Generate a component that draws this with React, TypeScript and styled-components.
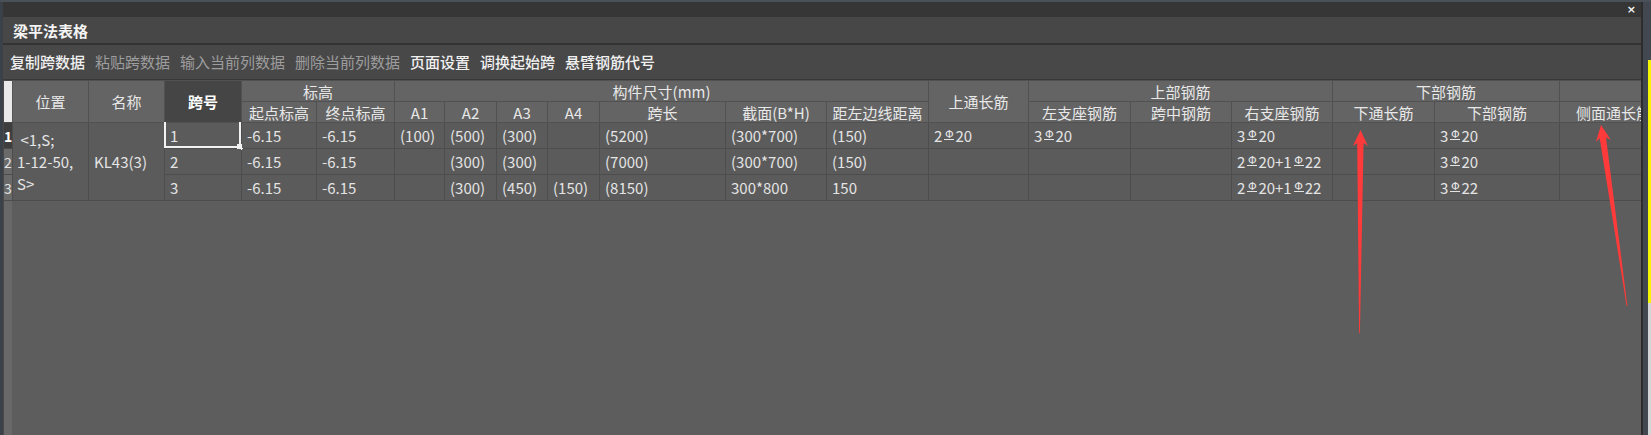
import React from "react";
import styled, { createGlobalStyle } from "styled-components";

const GlobalStyle = createGlobalStyle`
  html, body { margin: 0; padding: 0; background: #3d434b; }
  body { font-family: "Noto Sans CJK SC", "Noto Sans", sans-serif; }
  * { box-sizing: border-box; }
`;

const FONT = `"Noto Sans CJK SC", "Noto Sans", sans-serif`;

const Screen = styled.div`
  position: relative;
  width: 1651px;
  height: 435px;
  overflow: hidden;
  display: flex;
  flex-direction: column;
  background: #3d434b;
  font-family: ${FONT};
`;

const TopStrip = styled.div`
  height: 2px;
  background: #4a5058;
  flex: none;
`;

const Body = styled.div`
  flex: 1;
  display: flex;
  min-height: 0;
`;

const LeftEdge = styled.div`
  width: 3px;
  background: #3b4149;
  flex: none;
`;

const Window = styled.div`
  width: 1638px;
  flex: none;
  display: flex;
  flex-direction: column;
  overflow: hidden;
  background: #5d5d5d;
`;

const TitleBar = styled.div`
  height: 15px;
  background: #363636;
  display: flex;
  justify-content: flex-end;
  align-items: center;
  padding-right: 5px;
  flex: none;
`;

const CloseButton = styled.span`
  color: #f2f2f2;
  font-family: "DejaVu Sans", sans-serif;
  font-size: 11px;
  font-weight: bold;
  line-height: 11px;
`;

const Caption = styled.div`
  height: 28px;
  background: #474747;
  border-bottom: 2px solid #333333;
  padding: 1px 0 0 10px;
  color: #f4f4f4;
  font-size: 15px;
  font-weight: bold;
  line-height: 25px;
  flex: none;
`;

const Toolbar = styled.div`
  height: 35px;
  background: #484848;
  border-bottom: 1px solid #383838;
  display: flex;
  align-items: center;
  gap: 10px;
  padding-left: 7px;
  flex: none;
`;

const ToolButton = styled.span<{ $disabled?: boolean }>`
  font-size: 15px;
  line-height: 20px;
  color: ${(p) => (p.$disabled ? "#9d9d9d" : "#f0f0f0")};
  font-weight: ${(p) => (p.$disabled ? 400 : 500)};
  white-space: nowrap;
`;

const TableArea = styled.div`
  flex: 1;
  min-height: 0;
  overflow: hidden;
  background: linear-gradient(
    90deg,
    #4a4a4a 0 1px,
    #686868 1px 9px,
    #5d5d5d 9px
  );
`;

const Grid = styled.table`
  border-collapse: collapse;
  table-layout: fixed;
  width: 1664px;
  font-size: 15px;
  color: #e6e6e6;
`;

const Col = styled.col<{ $w: number }>`
  width: ${(p) => p.$w}px;
`;

const HeadRow = styled.tr`
  height: 21px;
`;

const BodyRow = styled.tr`
  height: 26px;
`;

const Head = styled.th<{ $dark?: boolean }>`
  background: ${(p) => (p.$dark ? "#454545" : "#646464")};
  color: ${(p) => (p.$dark ? "#ffffff" : "#e8e8e8")};
  font-weight: ${(p) => (p.$dark ? 700 : 400)};
  border: 1px solid #515151;
  padding: 0;
  text-align: center;
  vertical-align: middle;
  line-height: 19px;
  white-space: nowrap;
  overflow: hidden;
`;

const Corner = styled.th`
  background: #e9e9e9;
  border: 1px solid #4a4a4a;
  border-right-color: #555555;
  padding: 0;
`;

const RowNo = styled.td<{ $current?: boolean }>`
  background: ${(p) => (p.$current ? "#3e3e3e" : "#6a6a6a")};
  color: ${(p) => (p.$current ? "#ffffff" : "#e4e4e4")};
  font-weight: ${(p) => (p.$current ? 700 : 400)};
  font-size: 14px;
  border: 1px solid #4c4c4c;
  border-left-color: #4a4a4a;
  padding: 0;
  text-align: left;
  vertical-align: middle;
  overflow: hidden;
`;

const Cell = styled.td<{ $selected?: boolean }>`
  position: relative;
  background: #5b5b5b;
  border: 1px solid #4d4d4d;
  padding: 0 0 0 5px;
  vertical-align: middle;
  line-height: 20px;
  white-space: nowrap;
  overflow: ${(p) => (p.$selected ? "visible" : "hidden")};
  color: #e4e4e4;
`;

const SelectionFrame = styled.span`
  position: absolute;
  left: -1px;
  right: 0px;
  top: -1px;
  bottom: 0px;
  border: 2px solid #f2f2f2;
  border-top: none;
  pointer-events: none;
`;

const SelectionHandle = styled.span`
  position: absolute;
  right: -4px;
  bottom: -4px;
  width: 6px;
  height: 6px;
  background: #f2f2f2;
`;

const MergedCell = styled.td<{ $pad?: number }>`
  background: #5b5b5b;
  border: 1px solid #4d4d4d;
  padding: 0 0 0 ${(p) => p.$pad ?? 4}px;
  vertical-align: middle;
  white-space: pre-wrap;
  line-height: 22px;
  color: #e4e4e4;
`;

const Grade = styled.span`
  display: inline-block;
  font-family: "DejaVu Sans", sans-serif;
  font-size: 11px;
  line-height: 9px;
  width: 10px;
  margin: 0 1px 0 2px;
  text-align: center;
  border-bottom: 1px solid #e4e4e4;
  vertical-align: 4px;
`;

const RightEdge = styled.div`
  width: 10px;
  flex: none;
  display: flex;
  border-left: 2px solid #2c2c2c;
`;

const Gutter = styled.div`
  width: 5px;
  background: #434850;
`;

const Stripe = styled.div`
  width: 3px;
  background: linear-gradient(
    180deg,
    #434850 0 58px,
    #f5f500 58px 301px,
    #d2d4d6 301px
  );
`;

const Overlay = styled.svg`
  position: absolute;
  left: 0;
  top: 0;
  pointer-events: none;
`;

const widths = [
  9, 76, 76, 77, 75, 78, 50, 52, 51, 52, 126, 101, 102, 100, 102, 101, 101, 102, 125, 108,
];

const Rebar: React.FC<{ text: string }> = ({ text }) => {
  const parts = text.split("C");
  return (
    <>
      {parts.map((p, i) => (
        <React.Fragment key={i}>
          {i > 0 && <Grade>Φ</Grade>}
          {p}
        </React.Fragment>
      ))}
    </>
  );
};

type Row = string[];
const rows: Row[] = [
  ["1", "-6.15", "-6.15", "(100)", "(500)", "(300)", "", "(5200)", "(300*700)", "(150)", "2C20", "3C20", "", "3C20", "", "3C20", ""],
  ["2", "-6.15", "-6.15", "", "(300)", "(300)", "", "(7000)", "(300*700)", "(150)", "", "", "", "2C20+1C22", "", "3C20", ""],
  ["3", "-6.15", "-6.15", "", "(300)", "(450)", "(150)", "(8150)", "300*800", "150", "", "", "", "2C20+1C22", "", "3C22", ""],
];

const rebarCols = new Set([10, 11, 12, 13, 14, 15, 16]);

function arrowPoints(tx: number, ty: number, bx: number, by: number) {
  const dx = bx - tx;
  const dy = by - ty;
  const len = Math.hypot(dx, dy);
  const ux = dx / len;
  const uy = dy / len;
  const px = -uy;
  const py = ux;
  const headLen = 16;
  const headHalf = 7.5;
  const neck = 13;
  const shaftHalf = 3.2;
  const tailHalf = 0.4;
  const hx = tx + ux * headLen;
  const hy = ty + uy * headLen;
  const nx = tx + ux * neck;
  const ny = ty + uy * neck;
  const pts = [
    [tx, ty],
    [hx + px * headHalf, hy + py * headHalf],
    [nx + px * shaftHalf, ny + py * shaftHalf],
    [bx + px * tailHalf, by + py * tailHalf],
    [bx - px * tailHalf, by - py * tailHalf],
    [nx - px * shaftHalf, ny - py * shaftHalf],
    [hx - px * headHalf, hy - py * headHalf],
  ];
  return pts.map((p) => `${p[0].toFixed(1)},${p[1].toFixed(1)}`).join(" ");
}

const toolItems: { label: string; disabled?: boolean }[] = [
  { label: "复制跨数据" },
  { label: "粘贴跨数据", disabled: true },
  { label: "输入当前列数据", disabled: true },
  { label: "删除当前列数据", disabled: true },
  { label: "页面设置" },
  { label: "调换起始跨" },
  { label: "悬臂钢筋代号" },
];

export default function App() {
  return (
    <>
      <GlobalStyle />
      <Screen>
        <TopStrip />
        <Body>
          <LeftEdge />
          <Window>
            <TitleBar>
              <CloseButton>×</CloseButton>
            </TitleBar>
            <Caption>梁平法表格</Caption>
            <Toolbar>
              {toolItems.map((t) => (
                <ToolButton key={t.label} $disabled={t.disabled}>
                  {t.label}
                </ToolButton>
              ))}
            </Toolbar>
            <TableArea>
              <Grid>
                <colgroup>
                  {widths.map((w, i) => (
                    <Col key={i} $w={w} />
                  ))}
                </colgroup>
                <thead>
                  <HeadRow>
                    <Corner rowSpan={2} />
                    <Head rowSpan={2}>位置</Head>
                    <Head rowSpan={2}>名称</Head>
                    <Head rowSpan={2} $dark>
                      跨号
                    </Head>
                    <Head colSpan={2}>标高</Head>
                    <Head colSpan={7}>构件尺寸(mm)</Head>
                    <Head rowSpan={2}>上通长筋</Head>
                    <Head colSpan={3}>上部钢筋</Head>
                    <Head colSpan={2}>下部钢筋</Head>
                    <Head />
                  </HeadRow>
                  <HeadRow>
                    <Head>起点标高</Head>
                    <Head>终点标高</Head>
                    <Head>A1</Head>
                    <Head>A2</Head>
                    <Head>A3</Head>
                    <Head>A4</Head>
                    <Head>跨长</Head>
                    <Head>截面(B*H)</Head>
                    <Head>距左边线距离</Head>
                    <Head>左支座钢筋</Head>
                    <Head>跨中钢筋</Head>
                    <Head>右支座钢筋</Head>
                    <Head>下通长筋</Head>
                    <Head>下部钢筋</Head>
                    <Head>侧面通长筋</Head>
                  </HeadRow>
                </thead>
                <tbody>
                  {rows.map((r, ri) => (
                    <BodyRow key={ri}>
                      <RowNo $current={ri === 0}>{ri + 1}</RowNo>
                      {ri === 0 && (
                        <>
                          <MergedCell rowSpan={3}>{" <1,S;\n1-12-50,\nS>"}</MergedCell>
                          <MergedCell rowSpan={3} $pad={5}>
                            KL43(3)
                          </MergedCell>
                        </>
                      )}
                      {r.map((v, ci) => (
                        <Cell key={ci} $selected={ri === 0 && ci === 0}>
                          {rebarCols.has(ci) ? <Rebar text={v} /> : v}
                          {ri === 0 && ci === 0 && (
                            <SelectionFrame>
                              <SelectionHandle />
                            </SelectionFrame>
                          )}
                        </Cell>
                      ))}
                    </BodyRow>
                  ))}
                </tbody>
              </Grid>
            </TableArea>
          </Window>
          <RightEdge>
            <Gutter />
            <Stripe />
          </RightEdge>
        </Body>
        <Overlay width={1651} height={435} viewBox="0 0 1651 435">
          <polygon points={arrowPoints(1360.5, 130, 1359.5, 333)} fill="#ff3a3a" />
          <polygon points={arrowPoints(1601, 125, 1627, 306)} fill="#ff3a3a" />
        </Overlay>
      </Screen>
    </>
  );
}
